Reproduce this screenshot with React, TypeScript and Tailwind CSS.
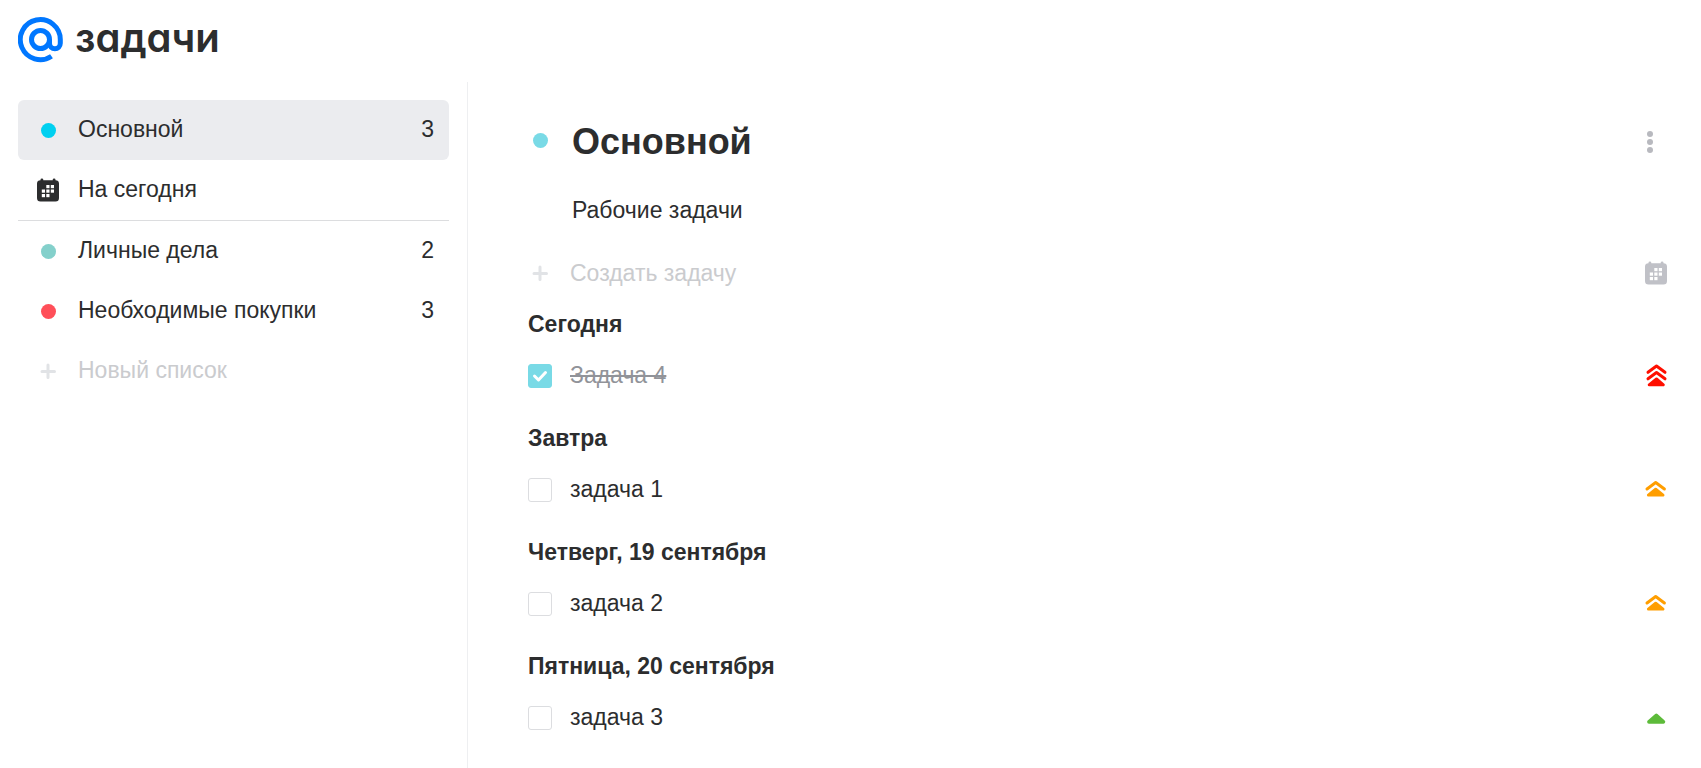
import { useState } from "react";
import clsx from "clsx";

type Priority = "high" | "medium" | "low";

interface TaskList {
  id: string;
  title: string;
  count: number;
  dot: string;
}

interface Task {
  id: number;
  day: string;
  title: string;
  priority: Priority;
  done: boolean;
}

const mainList: TaskList = { id: "main", title: "Основной", count: 3, dot: "bg-[#00d0f0]" };

const otherLists: TaskList[] = [
  { id: "personal", title: "Личные дела", count: 2, dot: "bg-[#84d0cb]" },
  { id: "shopping", title: "Необходимые покупки", count: 3, dot: "bg-[#ff4f59]" },
];

const initialTasks: Task[] = [
  { id: 4, day: "Сегодня", title: "Задача 4", priority: "high", done: true },
  { id: 1, day: "Завтра", title: "задача 1", priority: "medium", done: false },
  { id: 2, day: "Четверг, 19 сентября", title: "задача 2", priority: "medium", done: false },
  { id: 3, day: "Пятница, 20 сентября", title: "задача 3", priority: "low", done: false },
];

function LogoIcon() {
  return (
    <svg className="h-[46px] w-[46px]" viewBox="0 0 46 46" fill="none" stroke="#0077ff" strokeWidth="5" aria-hidden="true">
      <circle cx="22.500" cy="22.500" r="9" />
      <path d="M31.500 22.500v3.800a5.300 5.300 0 0 0 10.800 0V22.500A20 20 0 1 0 33.500 39.200" />
    </svg>
  );
}

function CalendarIcon({ className }: { className?: string }) {
  return (
    <svg className={clsx("h-6 w-6", className)} viewBox="0 0 24 24" fill="currentColor" aria-hidden="true">
      <path d="M4.500 2.200V1.800a1.400 1.400 0 0 1 2.800 0v.4h9.400v-.4a1.400 1.400 0 0 1 2.800 0v.4A3.500 3.500 0 0 1 23 5.500v14.500a3.500 3.500 0 0 1-3.500 3.500h-15A3.500 3.500 0 0 1 1 20V5.500a3.500 3.500 0 0 1 3.500-3.300z" />
      <g fill="#fff">
        <rect x="10.300" y="7" width="3.200" height="3.200" />
        <rect x="14.800" y="7" width="3.200" height="3.200" />
        <rect x="5.800" y="11.500" width="3.200" height="3.200" />
        <rect x="10.300" y="11.500" width="3.200" height="3.200" />
        <rect x="14.800" y="11.500" width="3.200" height="3.200" />
        <rect x="5.800" y="16" width="3.200" height="3.200" />
        <rect x="10.300" y="16" width="3.200" height="3.200" />
      </g>
    </svg>
  );
}

function PlusIcon() {
  return (
    <svg className="h-4 w-4 text-[#e1e3e6]" viewBox="0 0 16 16" fill="none" stroke="currentColor" strokeWidth="3" strokeLinecap="round" aria-hidden="true">
      <path d="M8 2v12.500M2 8.500h12.500" />
    </svg>
  );
}

function PriorityIcon({ priority }: { priority: Priority }) {
  if (priority === "high") {
    return (
      <svg className="h-6 w-6 text-[#ff0f00]" viewBox="0 0 24 24" fill="none" stroke="currentColor" strokeWidth="3" strokeLinecap="round" strokeLinejoin="round" role="img" aria-label="Высокий приоритет">
        <path d="M4 8.300l8.500-6.300L21 8.300M4 14.800l8.500-6.300L21 14.800" />
        <path d="M12.500 15l6.800 5.800H5.200z" fill="currentColor" />
      </svg>
    );
  }
  if (priority === "medium") {
    return (
      <svg className="h-6 w-6 text-[#ff9e00]" viewBox="0 0 24 24" fill="none" stroke="currentColor" strokeWidth="3" strokeLinecap="round" strokeLinejoin="round" role="img" aria-label="Средний приоритет">
        <path d="M3 11l8.700-6.500L20.400 11" />
        <path d="M11.700 11.200l7.300 5.900H4.400z" fill="currentColor" />
      </svg>
    );
  }
  return (
    <svg className="h-6 w-6 text-[#5dbb3a]" viewBox="0 0 24 24" fill="currentColor" stroke="currentColor" strokeWidth="3.500" strokeLinejoin="round" role="img" aria-label="Низкий приоритет">
      <path d="M12.300 9.400l7.200 6.500H4.900z" />
    </svg>
  );
}

interface ListButtonProps {
  list: TaskList;
  active: boolean;
  onSelect: (id: string) => void;
}

function ListButton({ list, active, onSelect }: ListButtonProps) {
  return (
    <button
      type="button"
      onClick={() => onSelect(list.id)}
      className={clsx("flex h-[60px] w-full items-center rounded-md pr-[15px] text-left", active && "bg-[#ebecef]")}
    >
      <span className="flex w-[60px] justify-center">
        <span className={clsx("h-[15px] w-[15px] rounded-full", list.dot)} />
      </span>
      <span className="flex-1 pb-0.5">{list.title}</span>
      <span className="pb-0.5">{list.count}</span>
    </button>
  );
}

export default function App() {
  const [activeList, setActiveList] = useState("main");
  const [tasks, setTasks] = useState(initialTasks);

  const toggleTask = (id: number) =>
    setTasks((prev) => prev.map((task) => (task.id === id ? { ...task, done: !task.done } : task)));

  return (
    <div className="flex min-h-screen flex-col bg-white font-['Liberation_Sans',Arial,sans-serif] text-[23px] leading-[30px] text-[#2c2d2e]">
      <header className="flex h-[82px] items-center gap-[11px] px-[18px] pb-0.5">
        <LogoIcon />
        <span className="pb-1 font-[Inter,sans-serif] text-[40px] leading-[48px] font-semibold [font-feature-settings:'cv11']">
          задачи
        </span>
      </header>

      <div className="flex flex-1">
        <aside className="w-[468px] shrink-0 border-r border-[#eeeff1] p-[18px]">
          <nav>
            <ListButton list={mainList} active={activeList === "main"} onSelect={setActiveList} />
            <button type="button" className="flex h-[60px] w-full items-center text-left">
              <span className="flex w-[60px] justify-center">
                <CalendarIcon />
              </span>
              <span className="pb-0.5">На сегодня</span>
            </button>
            <hr className="border-[#dcdddf]" />
            {otherLists.map((list) => (
              <ListButton key={list.id} list={list} active={activeList === list.id} onSelect={setActiveList} />
            ))}
          </nav>
          <label className="flex h-[60px] items-center">
            <span className="flex w-[60px] justify-center">
              <PlusIcon />
            </span>
            <input
              type="text"
              aria-label="Новый список"
              placeholder="Новый список"
              className="min-w-0 flex-1 pb-0.5 outline-none placeholder:text-[#cacbce]"
            />
          </label>
        </aside>

        <main className="min-w-0 flex-1 pt-9 pr-[33px] pl-[60px]">
          <div className="flex h-12 items-center">
            <span className="mb-1 ml-[5px] h-[15px] w-[15px] rounded-full bg-[#79dae6]" />
            <h1 className="ml-6 flex-1 text-4xl font-bold">Основной</h1>
            <button type="button" aria-label="Действия со списком" className="mr-1.5">
              <svg className="h-6 w-6 text-[#b8b9bf]" viewBox="0 0 24 24" fill="currentColor" aria-hidden="true">
                <circle cx="12" cy="4" r="3" />
                <circle cx="12" cy="12" r="3" />
                <circle cx="12" cy="20" r="3" />
              </svg>
            </button>
          </div>
          <p className="mt-[29px] pl-11">Рабочие задачи</p>

          <div className="mt-[18px] flex h-[60px] items-center">
            <label className="flex flex-1 items-center">
              <span className="flex w-[42px] pl-1">
                <PlusIcon />
              </span>
              <input
                type="text"
                aria-label="Создать задачу"
                placeholder="Создать задачу"
                className="min-w-0 flex-1 outline-none placeholder:text-[#cacbce]"
              />
            </label>
            <button type="button" aria-label="Выбрать дату">
              <CalendarIcon className="text-[#c0c1c7]" />
            </button>
          </div>

          <div className="mt-1.5 flex flex-col gap-[17px]">
            {tasks.map((task) => (
              <section key={task.id}>
                <h2 className="pb-[7px] font-bold">{task.day}</h2>
                <div className="flex h-[60px] items-center">
                  <label className="flex flex-1 items-center gap-[18px]">
                    <span className="grid h-6 w-6 place-items-center">
                      <input
                        type="checkbox"
                        checked={task.done}
                        onChange={() => toggleTask(task.id)}
                        className="col-start-1 row-start-1 h-6 w-6 appearance-none rounded-[3px] border border-[#dcdde0] checked:border-[#79dae6] checked:bg-[#79dae6]"
                      />
                      {task.done && (
                        <svg className="pointer-events-none col-start-1 row-start-1 h-6 w-6" viewBox="0 0 24 24" fill="none" stroke="#fff" strokeWidth="3" strokeLinecap="round" strokeLinejoin="round" aria-hidden="true">
                          <path d="M6.500 12l4 4 7-7.500" />
                        </svg>
                      )}
                    </span>
                    <span className={clsx("pb-0.5", task.done && "text-[#919399] line-through")}>{task.title}</span>
                  </label>
                  <PriorityIcon priority={task.priority} />
                </div>
              </section>
            ))}
          </div>
        </main>
      </div>
    </div>
  );
}
